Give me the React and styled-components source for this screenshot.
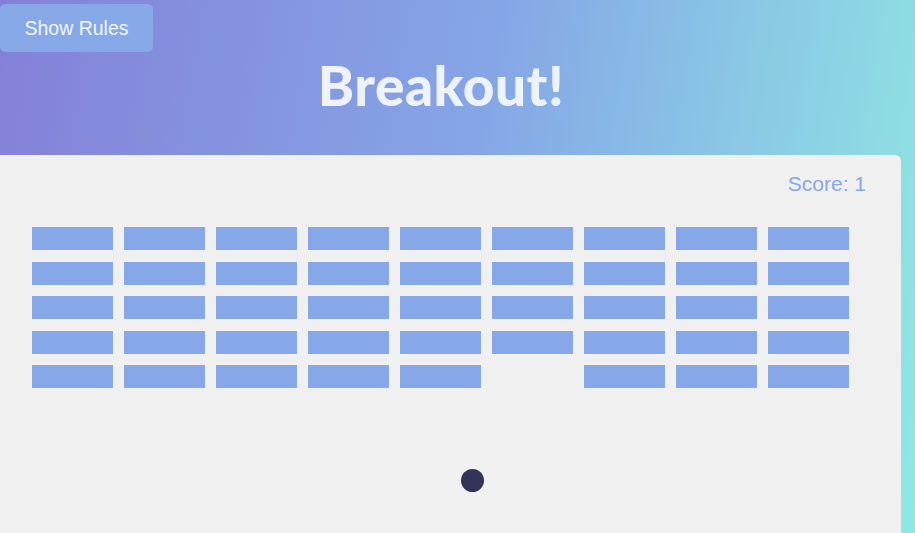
import React from 'react'
import styled, { createGlobalStyle } from 'styled-components'

const GlobalStyle = createGlobalStyle`
  html, body {
    margin: 0;
    padding: 0;
    overflow: hidden;
  }
  body {
    font-family: "Liberation Sans", Arial, sans-serif;
  }
`

const Page = styled.div`
  width: 915px;
  height: 533px;
  overflow: hidden;
  background: linear-gradient(100deg, #8480d8 0%, #85a6e6 50%, #8fe8e3 100%);
  display: flex;
  flex-direction: column;
`
const Header = styled.div`
  display: flex;
  flex-direction: column;
  padding-top: 4px;
`
const RulesButton = styled.button`
  align-self: flex-start;
  width: 153px;
  height: 48px;
  border: none;
  outline: none;
  border-radius: 5px;
  background: #86a8e7;
  color: #f2f5ff;
  font-family: "Liberation Sans", Arial, sans-serif;
  font-size: 19.5px;
  cursor: pointer;
`
const Title = styled.h1`
  margin: 0;
  height: 103px;
  padding: 3px 33px 0 0;
  box-sizing: border-box;
  text-align: center;
  font-family: Lato, "Noto Sans", sans-serif;
  font-weight: 900;
  font-size: 55px;
  line-height: 60px;
  color: #eef2fb;
  letter-spacing: 0.5px;
`
const Board = styled.div`
  position: relative;
  width: 901px;
  flex: 1;
  background: #f0f0f0;
  border-radius: 0 6px 0 0;
  display: flex;
  flex-direction: column;
`
const Score = styled.div`
  align-self: flex-end;
  margin: 17px 35px 0 0;
  font-size: 21px;
  line-height: 24px;
  color: #87a8e8;
`
const Bricks = styled.div`
  display: grid;
  grid-template-columns: repeat(9, 80.5px);
  grid-auto-rows: 23px;
  column-gap: 11.5px;
  row-gap: 11.5px;
  margin: 31px 0 0 32px;
`
const Brick = styled.div`
  background: ${props => props.$gone ? 'transparent' : '#87a8e8'};
`
const Ball = styled.div`
  position: absolute;
  left: 461px;
  top: 314px;
  width: 23px;
  height: 23px;
  border-radius: 50%;
  background: #33335a;
`

const rows = 5
const cols = 9
const broken = ['4-5']

const App = () => {
  const bricks = []
  for (let r = 0; r < rows; r++) {
    for (let c = 0; c < cols; c++) {
      bricks.push(<Brick key={`${r}-${c}`} $gone={broken.includes(`${r}-${c}`)} />)
    }
  }
  return (
    <Page>
      <GlobalStyle />
      <Header>
        <RulesButton>Show Rules</RulesButton>
        <Title>Breakout!</Title>
      </Header>
      <Board>
        <Score>Score: 1</Score>
        <Bricks>{bricks}</Bricks>
        <Ball />
      </Board>
    </Page>
  )
}

export default App
